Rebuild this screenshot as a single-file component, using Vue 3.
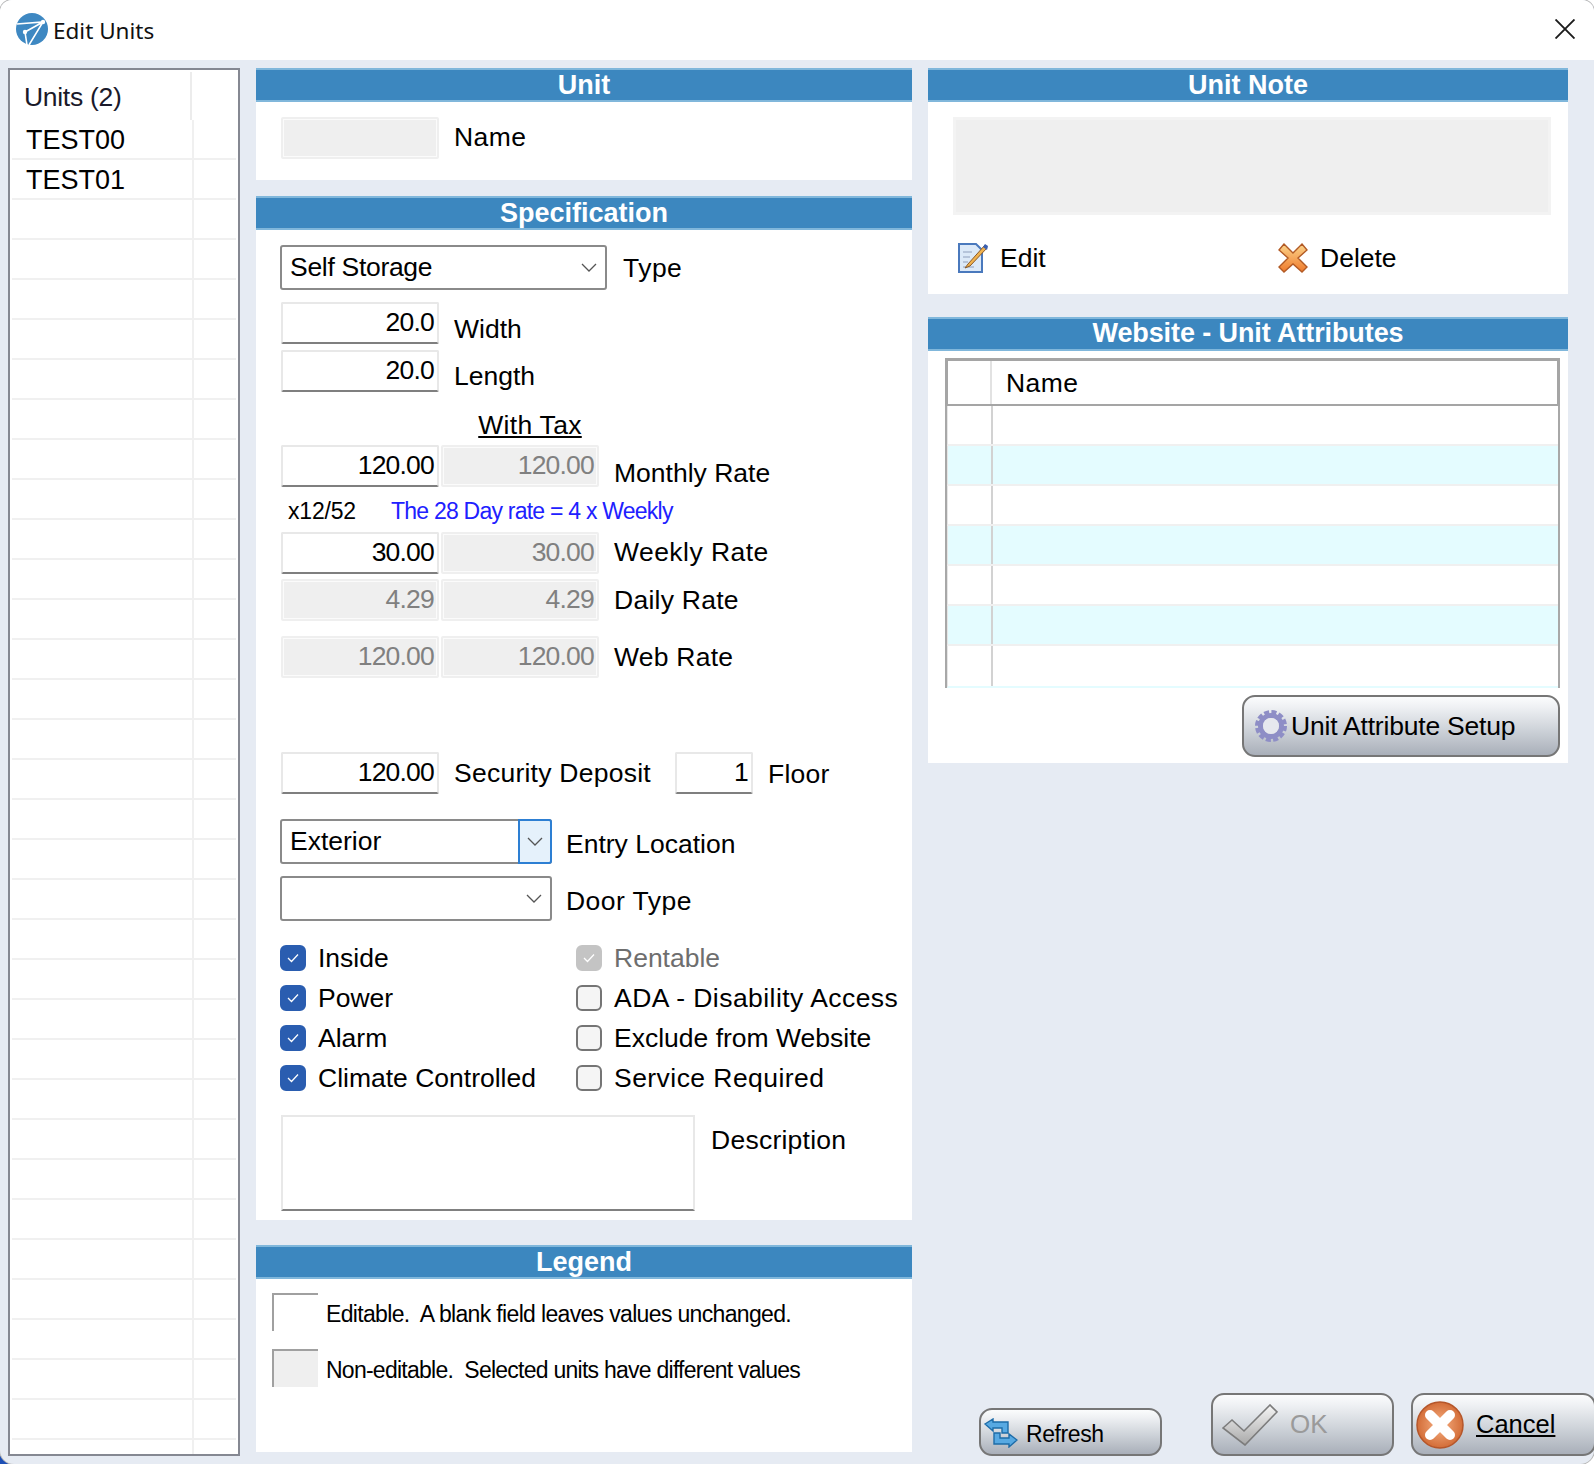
<script setup>
// Edit Units dialog - static recreation
const unitRows = Array.from({ length: 34 }, (_, i) => ['TEST00', 'TEST01'][i] || '')
const attrRows = [0, 1, 2, 3, 4, 5, 6]
const leftChecks = ['Inside', 'Power', 'Alarm', 'Climate Controlled']
const rightChecks = [
  { label: 'Rentable', state: 'off-grey', wide: false },
  { label: 'ADA - Disability Access', state: '', wide: true },
  { label: 'Exclude from Website', state: '', wide: false },
  { label: 'Service Required', state: '', wide: true },
]
</script>

<template>
  <div class="page">
    <header class="titlebar">
      <svg class="app-icon" viewBox="0 0 32 32">
        <circle cx="16" cy="16" r="16" fill="#3e88c2" />
        <path d="M1 11 L27 9 L13 32 M9 19 L27 9 M9 19 L11 32" fill="none" stroke="#fff" stroke-width="1.6" />
        <circle cx="27" cy="9" r="2.2" fill="#fff" />
        <circle cx="9" cy="19" r="2.2" fill="#fff" />
      </svg>
      <span class="title">Edit Units</span>
      <svg class="close" viewBox="0 0 20 20">
        <path d="M0.5 0.5 L19.5 19.5 M19.5 0.5 L0.5 19.5" stroke="#1c1c1c" stroke-width="1.9" />
      </svg>
    </header>

    <main class="main">
      <aside class="units">
        <div class="units-head">
          <span class="units-head-name">Units (2)</span>
        </div>
        <div v-for="(name, i) in unitRows" :key="i" class="unit-row">
          <span class="unit-name">{{ name }}</span>
        </div>
      </aside>

      <section class="mid">
        <div class="panel name-panel">
          <h2 class="bar">Unit</h2>
          <div class="row name-row">
            <div class="input off"></div>
            <span class="lbl wide gap15 up2">Name</span>
          </div>
        </div>

        <div class="panel spec">
          <h2 class="bar">Specification</h2>
          <div class="form">
            <div class="row r-type">
              <div class="select w326">
                <span class="tight">Self Storage</span>
                <svg class="chev" viewBox="0 0 16 9"><path d="M1 1 L8 8 L15 1" /></svg>
              </div>
              <span class="lbl wide gap16 down2">Type</span>
            </div>
            <div class="row r-width">
              <div class="input">20.0</div>
              <span class="lbl gap15 down12">Width</span>
            </div>
            <div class="row r-length">
              <div class="input">20.0</div>
              <span class="lbl gap15 down10">Length</span>
            </div>
            <div class="with-tax"><u>With Tax</u></div>
            <div class="row r-monthly">
              <div class="input">120.00</div>
              <div class="input off gap2">120.00</div>
              <span class="lbl gap15 down14">Monthly Rate</span>
            </div>
            <div class="note-row">
              <span class="x-rate">x12/52</span>
              <span class="day-rate">The 28 Day rate = 4 x Weekly</span>
            </div>
            <div class="row">
              <div class="input">30.00</div>
              <div class="input off gap2">30.00</div>
              <span class="lbl wide gap15 up2">Weekly Rate</span>
            </div>
            <div class="row r-daily">
              <div class="input off">4.29</div>
              <div class="input off gap2">4.29</div>
              <span class="lbl med gap15">Daily Rate</span>
            </div>
            <div class="row r-web">
              <div class="input off">120.00</div>
              <div class="input off gap2">120.00</div>
              <span class="lbl med gap15">Web Rate</span>
            </div>
            <div class="row r-deposit">
              <div class="input">120.00</div>
              <span class="lbl med gap15 deposit-lbl">Security Deposit</span>
              <div class="input floor">1</div>
              <span class="lbl med gap15 down2">Floor</span>
            </div>
            <div class="row r-entry">
              <div class="select w271 active">
                <span>Exterior</span>
                <span class="drop-btn">
                  <svg class="chev" viewBox="0 0 16 9"><path d="M1 1 L8 8 L15 1" /></svg>
                </span>
              </div>
              <span class="lbl gap14 down4">Entry Location</span>
            </div>
            <div class="row r-door">
              <div class="select w271">
                <span></span>
                <svg class="chev" viewBox="0 0 16 9"><path d="M1 1 L8 8 L15 1" /></svg>
              </div>
              <span class="lbl wide gap14 down4">Door Type</span>
            </div>
            <div class="checks">
              <div class="check-col">
                <div v-for="c in leftChecks" :key="c" class="check">
                  <span class="box on">
                    <svg viewBox="0 0 12 10"><path d="M1 5 L4.5 8.5 L11 1.5" /></svg>
                  </span>
                  <span class="check-label">{{ c }}</span>
                </div>
              </div>
              <div class="check-col">
                <div v-for="c in rightChecks" :key="c.label" class="check">
                  <span class="box" :class="c.state">
                    <svg v-if="c.state" viewBox="0 0 12 10"><path d="M1 5 L4.5 8.5 L11 1.5" /></svg>
                  </span>
                  <span class="check-label" :class="{ grey: c.state, wide: c.wide }">{{ c.label }}</span>
                </div>
              </div>
            </div>
            <div class="row r-desc">
              <div class="desc"></div>
              <span class="lbl med desc-lbl">Description</span>
            </div>
          </div>
        </div>

        <div class="panel legend">
          <h2 class="bar">Legend</h2>
          <div class="legend-row first">
            <span class="swatch"></span>
            <span class="legend-text">Editable.&nbsp; A blank field leaves values unchanged.</span>
          </div>
          <div class="legend-row">
            <span class="swatch grey"></span>
            <span class="legend-text second">Non-editable.&nbsp; Selected units have different values</span>
          </div>
        </div>
      </section>

      <section class="right">
        <div class="panel note-panel">
          <h2 class="bar">Unit Note</h2>
          <div class="note-box"></div>
          <div class="note-actions">
            <div class="action edit">
              <svg class="action-icon" viewBox="0 0 30 30">
                <path d="M1 1 H18 L24 7 V29 H1 Z" fill="#dce9f8" stroke="#4a79bd" stroke-width="2" />
                <path d="M5 9 H14 M5 14 H12 M5 19 H10 M5 24 H16" stroke="#a9b8cf" stroke-width="1.6" />
                <path d="M27 2 L10 21 L7 25 L12 23 L29 5 Z" fill="#f0b24f" stroke="#8a5a2a" stroke-width="1" />
                <path d="M25 4 L29 7 L30 3 L27 1 Z" fill="#3a5fb0" />
              </svg>
              <span>Edit</span>
            </div>
            <div class="action del">
              <svg class="action-icon" viewBox="0 0 30 30">
                <defs>
                  <linearGradient id="xg" x1="0" y1="0" x2="0" y2="1">
                    <stop offset="0" stop-color="#fbd58c" />
                    <stop offset="1" stop-color="#ef7a2c" />
                  </linearGradient>
                </defs>
                <path d="M6 1 L15 10 L24 1 L29 7 L20 15 L29 24 L24 29 L15 21 L6 29 L1 24 L10 15 L1 7 Z" fill="url(#xg)" stroke="#b25a25" stroke-width="1.4" />
              </svg>
              <span>Delete</span>
            </div>
          </div>
        </div>

        <div class="panel attr-panel">
          <h2 class="bar attr-bar">Website - Unit Attributes</h2>
          <div class="attr-table">
            <div class="attr-head">
              <span class="attr-gutter"></span>
              <span class="attr-name">Name</span>
            </div>
            <div v-for="r in attrRows" :key="r" class="attr-row" :class="{ alt: r % 2 === 1 }">
              <span class="attr-gutter"></span>
            </div>
          </div>
          <div class="attr-foot">
            <button class="btn setup">
              <svg class="gear" viewBox="0 0 32 32">
                <circle cx="16" cy="16" r="14" fill="none" stroke="#8e8ec6" stroke-width="4" stroke-dasharray="5 2.33" />
                <circle cx="16" cy="16" r="10.5" fill="none" stroke="#8e8ec6" stroke-width="5" />
                <circle cx="16" cy="16" r="8" fill="#e6e8ee" />
              </svg>
              <span>Unit Attribute Setup</span>
            </button>
          </div>
        </div>

        <div class="actions">
          <button class="btn refresh">
            <svg class="refresh-icon" viewBox="0 0 34 30">
              <path d="M1 6 L9 1 V4 H24 V15 H18 V10 H9 V13 Z" fill="#57a9e2" stroke="#1d6ca8" stroke-width="1.4" />
              <path d="M33 22 L25 29 V26 H10 V15 H16 V20 H25 V16 Z" fill="#57a9e2" stroke="#1d6ca8" stroke-width="1.4" />
            </svg>
            <span>Refresh</span>
          </button>
          <button class="btn ok">
            <svg class="ok-icon" viewBox="0 0 56 42">
              <defs>
                <linearGradient id="okg" x1="0" y1="0" x2="0" y2="1">
                  <stop offset="0" stop-color="#f6f6f6" />
                  <stop offset="1" stop-color="#a8a8a8" />
                </linearGradient>
              </defs>
              <path d="M1 24 L10 16 L22 27 L48 1 L55 8 L23 41 Z" fill="url(#okg)" stroke="#7c7c7c" stroke-width="1.6" />
            </svg>
            <span>OK</span>
          </button>
          <button class="btn cancel">
            <svg class="cancel-icon" viewBox="0 0 48 48">
              <defs>
                <radialGradient id="cg" cx="0.5" cy="0.5" r="0.55">
                  <stop offset="0" stop-color="#f7b184" />
                  <stop offset="1" stop-color="#cf6630" />
                </radialGradient>
              </defs>
              <circle cx="24" cy="24" r="23" fill="url(#cg)" stroke="#b5562a" stroke-width="1.5" />
              <path d="M14 14 L34 34 M34 14 L14 34" stroke="#fff" stroke-width="10" stroke-linecap="round" />
            </svg>
            <u>Cancel</u>
          </button>
        </div>
      </section>
    </main>
  </div>
</template>

<style>
html, body {
  margin: 0;
  overflow: hidden;
  background: linear-gradient(#1d4fb5, #1d4fb5) left bottom / 30px 30px no-repeat, #fff;
}
</style>

<style scoped>
.page {
  width: 1594px;
  height: 1464px;
  box-sizing: border-box;
  display: flex;
  flex-direction: column;
  background: #e6ebf3;
  border-radius: 12px 12px 14px 14px;
  box-shadow: 0 0 0 1px #b9b9b9;
  overflow: hidden;
  font-family: "Liberation Sans", Arial, sans-serif;
  font-size: 26.5px;
  color: #000;
}

.titlebar {
  height: 60px;
  flex: none;
  display: flex;
  align-items: center;
  background: #fff;
  padding: 0 19px 0 16px;
  box-sizing: border-box;
}
.app-icon { width: 32px; height: 32px; margin-top: -2px; }
.title {
  margin-left: 5px;
  font-family: "Noto Sans", sans-serif;
  font-size: 22.5px;
  color: #111;
}
.close { width: 20px; height: 20px; margin-left: auto; margin-top: -3px; }

.main {
  flex: 1;
  display: flex;
  gap: 16px;
  padding: 8px 0 8px 8px;
  min-height: 0;
}

/* units list */
.units {
  width: 232px;
  flex: none;
  box-sizing: border-box;
  background: #fff;
  border: 2px solid #858892;
  padding: 0 2px;
  overflow: hidden;
}
.units-head {
  width: 182px;
  height: 48px;
  box-sizing: border-box;
  margin: 2px 0 0 -2px;
  padding: 4px 0 0 14px;
  border-right: 2px solid #ececec;
  line-height: 42px;
  letter-spacing: -0.3px;
}
.units-head-name { color: #1a1a2a; }
.unit-row {
  height: 40px;
  box-sizing: border-box;
  border-bottom: 2px solid #f0f0f0;
  background: linear-gradient(#f0f0f0, #f0f0f0) 180px 0 / 2px 100% no-repeat;
  padding-left: 14px;
  line-height: 40px;
}
.unit-name { font-size: 27px; }

/* panels */
.mid { width: 656px; flex: none; display: flex; flex-direction: column; }
.panel { background: #fff; }
.bar {
  margin: 0;
  height: 33.5px;
  box-sizing: border-box;
  border-top: 2px solid #80b7db;
  border-bottom: 2px solid #80b7db;
  background: #3c87bf;
  color: #fff;
  font-size: 27px;
  font-weight: 700;
  line-height: 31px;
  text-align: center;
}
.attr-bar { line-height: 29px; letter-spacing: -0.1px; }
.name-panel { height: 112px; }
.name-row { margin: 15px 0 0 25px; }
.spec { margin-top: 16px; height: 1024px; }
.legend { margin-top: 25px; height: 207px; }

.form { padding-left: 25px; }
.row { display: flex; align-items: center; }
.lbl { white-space: nowrap; line-height: 30px; }
.med { letter-spacing: 0.25px; }
.wide { letter-spacing: 0.45px; }
.tight { letter-spacing: -0.3px; }
.gap14 { margin-left: 14px; }
.gap15 { margin-left: 15px; }
.gap16 { margin-left: 16px; }
.gap2 { margin-left: 2px; }
.down2 { padding-top: 2px; }
.down4 { padding-top: 4px; }
.down10 { padding-top: 10px; }
.down12 { padding-top: 12px; }
.down14 { padding-top: 14px; }
.up2 { padding-bottom: 2px; }

.input {
  width: 158px;
  height: 42px;
  flex: none;
  box-sizing: border-box;
  border: 2px solid #e8e8e8;
  border-bottom-color: #7f7f7f;
  border-radius: 2px;
  padding-right: 3px;
  text-align: right;
  line-height: 36px;
  letter-spacing: -0.8px;
  background: #fff;
}
.input.off {
  background: #efefef;
  border-color: #efefef;
  box-shadow: inset 0 0 0 1px #fbfbfb;
  color: #808080;
}
.input.floor { width: 78px; }

.select {
  height: 45px;
  box-sizing: border-box;
  border: 2px solid #8a8a8a;
  border-radius: 3px;
  display: flex;
  align-items: center;
  justify-content: space-between;
  padding: 0 8px;
  flex: none;
}
.w326 { width: 327px; margin-left: -1px; }
.w271 { width: 272px; margin-left: -1px; }
.chev { width: 16px; height: 9px; flex: none; }
.chev path { fill: none; stroke: #555; stroke-width: 1.3; }
.select.active { padding-right: 0; }
.drop-btn {
  width: 34px;
  height: 45px;
  flex: none;
  box-sizing: border-box;
  margin-right: -2px;
  border: 2px solid #2d7fd3;
  border-radius: 0 3px 3px 0;
  background: #e5f1fb;
  display: flex;
  align-items: center;
  justify-content: center;
}

.r-type { margin-top: 15px; }
.r-width { margin-top: 12px; }
.r-length { margin-top: 6.5px; }
.with-tax {
  width: 498px;
  margin-top: 18px;
  height: 30px;
  line-height: 30px;
  text-align: center;
  letter-spacing: 0.3px;
}
.r-monthly { margin-top: 3.5px; }
.note-row {
  height: 44.5px;
  box-sizing: border-box;
  padding-top: 4px;
  display: flex;
  align-items: center;
  font-size: 23px;
  padding-left: 7px;
}
.x-rate { width: 103px; letter-spacing: -0.2px; }
.day-rate { color: #2020ff; letter-spacing: -0.77px; }
.r-daily { margin-top: 5px; }
.r-web { margin-top: 15px; }
.r-deposit { margin-top: 74px; }
.deposit-lbl { width: 221px; }
.r-entry { margin-top: 25px; }
.r-door { margin-top: 12px; }

.checks {
  display: flex;
  margin: 17px 0 0 -1px;
}
.check-col { width: 296px; }
.check { height: 40px; display: flex; align-items: center; }
.box {
  width: 26px;
  height: 26px;
  flex: none;
  box-sizing: border-box;
  border-radius: 6px;
  border: 2px solid #757575;
  background: #f5f5f5;
  display: flex;
  align-items: center;
  justify-content: center;
}
.box svg { width: 12px; height: 10px; }
.box path { fill: none; stroke: #fff; stroke-width: 1.3; }
.box.on { background: #2a5db0; border-color: #2a5db0; }
.box.off-grey { background: #c4c4c4; border-color: #c4c4c4; }
.check-label { margin-left: 12px; white-space: nowrap; }
.check-label.grey { color: #6e6e6e; }

.r-desc { margin-top: 17px; align-items: flex-start; }
.desc {
  width: 414px;
  height: 96px;
  box-sizing: border-box;
  border: 2px solid #e8e8e8;
  border-bottom-color: #808080;
}
.desc-lbl { margin: 9.5px 0 0 16px; }

/* legend */
.legend-row {
  display: flex;
  align-items: center;
  margin: 18px 0 0 16px;
  font-size: 23px;
}
.legend-row.first { margin-top: 14px; }
.swatch {
  width: 46px;
  height: 38px;
  box-sizing: border-box;
  border-top: 2px solid #a0a0a0;
  border-left: 2px solid #a0a0a0;
  flex: none;
}
.swatch.grey { background: #efefef; }
.legend-text { margin-left: 8px; padding-top: 6px; letter-spacing: -0.66px; white-space: pre; }
.legend-text.second { letter-spacing: -0.75px; }

/* right column */
.right { width: 666px; flex: none; display: flex; flex-direction: column; }
.note-panel, .attr-panel { width: 640px; }
.note-panel { height: 226px; overflow: hidden; }
.note-box {
  width: 598px;
  height: 98px;
  margin: 15.5px 0 0 25px;
  box-sizing: border-box;
  border: 3px solid #f3f3f3;
  background: #efefef;
}
.note-actions { display: flex; margin: 28px 0 0 30px; }
.action { display: flex; align-items: center; height: 30px; }
.action.edit { width: 320px; }
.action-icon { width: 30px; height: 30px; flex: none; margin-right: 12px; }

.attr-panel { margin-top: 23px; height: 446px; }
.attr-table {
  width: 615px;
  margin: 7.5px 0 0 17px;
  box-sizing: border-box;
  border-right: 2px solid #a8a8a8;
  border-left: 2px solid #a8a8a8;
  background: #fff;
}
.attr-head {
  height: 48px;
  box-sizing: border-box;
  margin: 0 -2px;
  border: 3px solid #a5a5a5;
  border-bottom-width: 2px;
  display: flex;
  align-items: center;
}
.attr-gutter {
  width: 44px;
  height: 100%;
  box-sizing: border-box;
  border-right: 2px solid #e2e2e2;
  flex: none;
}
.attr-name { margin-left: 14px; letter-spacing: 0.4px; padding-top: 2px; }
.attr-row {
  height: 40px;
  box-sizing: border-box;
  display: flex;
  border-bottom: 2px solid #f0f0f0;
  border-left: 1px solid #e6e6e6;
  background: #fff;
}
.attr-row:last-child { height: 42px; border-bottom: 2px solid #e4fcff; }
.attr-row.alt { background: #e4fcff; }
.attr-row .attr-gutter { width: 45px; border-right-color: #d2d2d2; }

.attr-foot { display: flex; justify-content: flex-end; padding: 7px 8px 0 0; }

.btn {
  box-sizing: border-box;
  border: 2px solid #767676;
  border-radius: 13px;
  background: linear-gradient(#fbfcfd 0%, #eef0f3 18%, #cfd4da 55%, #a9afb9 100%);
  display: flex;
  align-items: center;
  font-family: inherit;
  color: #000;
  padding: 0;
  flex: none;
}
.setup { width: 318px; height: 62px; padding-left: 11px; font-size: 26.5px; letter-spacing: -0.2px; }
.gear { width: 32px; height: 32px; margin-right: 4px; }

.actions {
  margin-top: auto;
  display: flex;
  align-items: flex-end;
  padding-left: 51px;
}
.refresh { width: 183px; height: 48px; padding-left: 3px; font-size: 23px; letter-spacing: -0.4px; }
.refresh span { padding-top: 4px; }
.refresh-icon { width: 34px; height: 30px; margin-right: 8px; margin-top: 2px; }
.ok {
  width: 183px;
  height: 63px;
  margin-left: 49px;
  padding-left: 9px;
  font-size: 26px;
  color: #9a9a9a;
}
.ok-icon { width: 56px; height: 42px; margin-right: 12px; }
.cancel { width: 185px; height: 63px; margin-left: 17px; padding-left: 3px; font-size: 25.5px; }
.cancel-icon { width: 48px; height: 48px; margin-right: 12px; }
</style>
